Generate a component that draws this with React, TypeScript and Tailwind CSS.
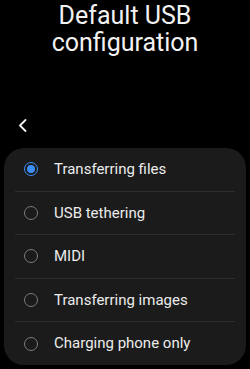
import { useState } from 'react'

const options = [
  'Transferring files',
  'USB tethering',
  'MIDI',
  'Transferring images',
  'Charging phone only',
]

export default function App() {
  const [selected, setSelected] = useState(0)

  return (
    <div
      className="w-[250px] h-[369px] bg-black text-white overflow-hidden"
      style={{ fontFamily: 'Roboto, "Noto Sans", sans-serif' }}
    >
      {/* Title */}
      <h1 className="pt-[2px] h-[56px] text-center text-[25px] leading-[27px] text-[#f2f2f2]">
        Default USB
        <br />
        configuration
      </h1>

      {/* Back */}
      <div className="h-[77px] flex items-end pl-[18px] pb-[1px]">
        <svg width="9" height="13" viewBox="0 0 9 13" fill="none">
          <path d="M7.5 1 L2 6.5 L7.5 12" stroke="#f0f0f0" strokeWidth="1.8" strokeLinecap="round" strokeLinejoin="round" />
        </svg>
      </div>

      {/* Options card */}
      <div className="mt-[15px] mx-[4px] rounded-[20px] bg-[#1b1b1b]">
        {options.map((label, i) => (
          <div key={label}>
            {i > 0 && <div className="mx-[11px] h-px bg-[#2e2e2e]" />}
            <button
              type="button"
              onClick={() => setSelected(i)}
              className="w-full h-[42.6px] flex items-center text-left"
            >
              <span className="w-[50px] flex justify-center pl-[3px]">
                {selected === i ? (
                  <span className="w-[14px] h-[14px] rounded-full border-[1.5px] border-[#3d8ef5] flex items-center justify-center">
                    <span className="w-[8px] h-[8px] rounded-full bg-[#3d8ef5]" />
                  </span>
                ) : (
                  <span className="w-[14px] h-[14px] rounded-full border-[1.5px] border-[#7a7a7a]" />
                )}
              </span>
              <span className="text-[15px] text-[#ececec]">{label}</span>
            </button>
          </div>
        ))}
      </div>
    </div>
  )
}
